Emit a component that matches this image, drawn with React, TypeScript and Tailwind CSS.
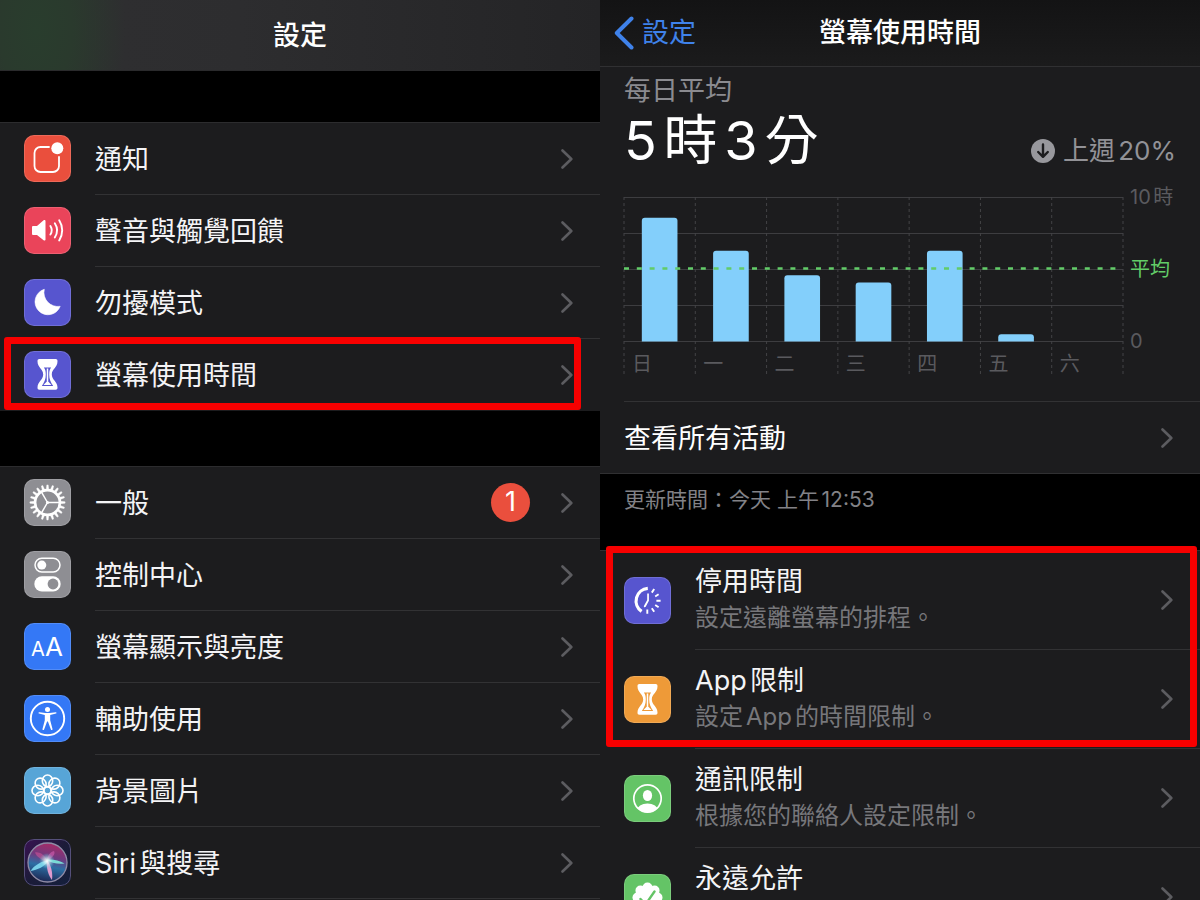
import type { ReactNode } from "react";
import clsx from "clsx";

type SettingRow = {
  id: string;
  label: string;
  desc?: string;
  icon: ReactNode;
  badge?: number;
};

type Usage = { day: string; hours: number };

const USAGE: Usage[] = [
  { day: "日", hours: 8.6 },
  { day: "一", hours: 6.3 },
  { day: "二", hours: 4.6 },
  { day: "三", hours: 4.1 },
  { day: "四", hours: 6.3 },
  { day: "五", hours: 0.5 },
  { day: "六", hours: 0 }
];

const PLOT_HEIGHT = 144;
const MAX_HOURS = 10;

function Tile({ className, children }: { className: string; children: ReactNode }) {
  return (
    <span className={clsx("block size-[47px] shrink-0 overflow-hidden rounded-[10px] ring-1 ring-white/15 ring-inset", className)}>
      <svg viewBox="0 0 47 47" className="size-full" fill="none" aria-hidden="true">
        {children}
      </svg>
    </span>
  );
}

function NotificationIcon() {
  return (
    <Tile className="bg-[#ea4f3d]">
      <path
        d="M25 12H16.5a6 6 0 0 0-6 6v13a6 6 0 0 0 6 6H29a6 6 0 0 0 6-6V22"
        stroke="#fff"
        strokeWidth="1.8"
        strokeLinecap="round"
      />
      <circle cx="33.3" cy="13.3" r="6" fill="#fff" />
    </Tile>
  );
}

function SoundIcon() {
  return (
    <Tile className="bg-[#ea445a]">
      <path d="M9 19h4l6.6-5.7c.9-.8 1.9-.3 1.9.8v18.3c0 1.1-1 1.6-1.9.8L13 28H9a1 1 0 0 1-1-1v-7a1 1 0 0 1 1-1Z" fill="#fff" />
      <path d="M26.4 19a8 8 0 0 1 0 8.6M30.8 16.2a13 13 0 0 1 0 14.2M35.2 13.2a18.5 18.5 0 0 1 0 20.2" stroke="#fff" strokeWidth="1.9" strokeLinecap="round" />
    </Tile>
  );
}

function MoonIcon() {
  return (
    <Tile className="bg-[#5755cf]">
      <path
        d="M20.3 10.3A13 13 0 1 0 36.2 27.3A14 14 0 0 1 20.3 10.3Z"
        fill="#fff"
        stroke="#fff"
        strokeWidth=".6"
        strokeLinejoin="round"
      />
    </Tile>
  );
}

function HourglassIcon({ className, cut }: { className: string; cut: string }) {
  return (
    <Tile className={className}>
      <path
        d="M15.5 8h16c1.5 0 2 .8 2 2.200C33.500 16.500 27.800 18 27.800 23.400S33.500 30.500 33.500 36.600c0 1.400-.5 2.200-2 2.200h-16c-1.500 0-2-.8-2-2.200C13.500 30.500 19.200 28.800 19.200 23.400S13.500 16.500 13.500 10.200c0-1.400.5-2.200 2-2.200Z"
        fill="#fff"
      />
      <path d="M19.8 16.6h7.400c-1.400 1.400-2 3.400-2 6.800 0 4.800 1.400 7.300 4 11.600H17.800c2.600-4.300 4-6.800 4-11.600 0-3.400-.6-5.400-2-6.800Z" fill={cut} />
      <path d="M23.5 17.600v13" stroke="#fff" strokeWidth="1.500" />
      <path d="M23.500 29c.5 2.200 2.600 3 4 4.900h-8c1.400-1.900 3.500-2.700 4-4.900Z" fill="#fff" />
    </Tile>
  );
}

function GearIcon() {
  return (
    <Tile className="bg-[#8e8e93]">
      {Array.from({ length: 20 }, (_, i) => (
        <path key={i} d="M22.300 10.500l.5-4.600h1.400l.5 4.600Z" fill="#fff" stroke="#fff" strokeWidth=".4" transform={`rotate(${i * 18} 23.5 23.5)`} />
      ))}
      <circle cx="23.5" cy="23.5" r="12.4" stroke="#fff" strokeWidth="2.6" />
      <path d="M23.500 23.500h12M23.500 23.500l-6-10.400M23.500 23.500l-6 10.400" stroke="#fff" strokeWidth="1.500" />
      <circle cx="23.500" cy="23.500" r="1.500" fill="#fff" />
    </Tile>
  );
}

function ControlCenterIcon() {
  return (
    <Tile className="bg-[#8e8e93]">
      <rect x="11" y="7.300" width="25" height="13.600" rx="6.800" stroke="#fff" strokeWidth="1.500" />
      <circle cx="17.800" cy="14.100" r="4.500" fill="#fff" />
      <rect x="10.300" y="25.300" width="26.400" height="15.300" rx="7.600" fill="#fff" />
      <circle cx="29" cy="33" r="5.400" fill="#8e8e93" />
    </Tile>
  );
}

function DisplayIcon() {
  return (
    <Tile className="bg-[#3478f6]">
      <text x="7" y="33" fill="#fff" fontSize="20">A</text>
      <text x="21" y="33" fill="#fff" fontSize="26">A</text>
    </Tile>
  );
}

function AccessibilityIcon() {
  return (
    <Tile className="bg-[#3478f6]">
      <circle cx="23.500" cy="23.500" r="16.700" stroke="#fff" strokeWidth="1.900" />
      <circle cx="23.500" cy="14.600" r="2.500" fill="#fff" />
      <path
        d="M15.300 17.200l6 .9h4.400l6-.9c1-.1 1.200 1.200.3 1.400l-5.800 1.500v5.200l2.300 8.600c.3 1.200-1.200 1.600-1.600.5l-3-8h-.8l-3 8c-.4 1.100-1.900.7-1.600-.5l2.300-8.600v-5.200L15 18.600c-.9-.2-.7-1.500.3-1.400Z"
        fill="#fff"
      />
    </Tile>
  );
}

function WallpaperIcon() {
  return (
    <Tile className="bg-[#57a5d7]">
      {[0, 45, 90, 135, 180, 225, 270, 315].map((a) => (
        <ellipse key={a} cx="23.500" cy="13.800" rx="5.200" ry="5.800" stroke="#fff" strokeWidth="1.600" transform={`rotate(${a} 23.5 23.5)`} />
      ))}
      <circle cx="23.500" cy="23.500" r="3.500" stroke="#fff" strokeWidth="1.600" />
    </Tile>
  );
}

function SiriIcon() {
  return (
    <Tile className="bg-[#1c1a38]">
      <defs>
        <linearGradient id="siri-bg" x1="0" y1="0" x2="1" y2="1">
          <stop offset="0" stopColor="#3a1252" />
          <stop offset=".5" stopColor="#1b1b38" />
          <stop offset="1" stopColor="#14203c" />
        </linearGradient>
        <linearGradient id="siri-orb" x1=".6" y1="0" x2=".4" y2="1">
          <stop offset="0" stopColor="#a82a66" />
          <stop offset=".35" stopColor="#6f3a80" />
          <stop offset=".6" stopColor="#2c6fa4" />
          <stop offset="1" stopColor="#1d2450" />
        </linearGradient>
        <radialGradient id="siri-glow">
          <stop offset="0" stopColor="#fff" />
          <stop offset=".35" stopColor="#d8f4f6" stopOpacity=".7" />
          <stop offset="1" stopColor="#4fc8e0" stopOpacity="0" />
        </radialGradient>
      </defs>
      <rect width="47" height="47" fill="url(#siri-bg)" />
      <circle cx="23.500" cy="23.500" r="19.500" fill="url(#siri-orb)" stroke="#8f8ba6" strokeWidth="1.300" />
      <path d="M23 23C17 21 12 17 11 13.500c5-1 11 3 12 9.500Z" fill="#e05a9c" opacity=".5" />
      <path d="M23 22c0-5 3-9 7-10 2 3-2 7-7 10Z" fill="#d65fb0" opacity=".6" />
      <path d="M22 20.500c7-.5 13 .5 18.500 4-6 1-14-.5-18.500-4Z" fill="#7deadd" opacity=".9" />
      <path d="M25 21.500c-8 .5-15 5-18.500 10.500 7-1 14-4.500 18.500-10.500Z" fill="#7fdcf2" opacity=".9" />
      <path d="M23 21c4 5 6 12.500 5 20-3.500-4-6-12-5-20Z" fill="#f3a3d6" opacity=".9" />
      <circle cx="23" cy="22" r="8" fill="url(#siri-glow)" />
      <rect x=".5" y=".5" width="46" height="46" rx="9.500" stroke="#55507a" />
    </Tile>
  );
}

function DowntimeIcon() {
  return (
    <Tile className="bg-[#5755cf]">
      <path d="M23.800 11.300A12.700 12.700 0 0 0 17.600 34.400" stroke="#fff" strokeWidth="3.200" />
      <path d="M23.200 16.500h1.700v7.300l-3.200 6c-.7 1-2.200.3-1.800-.8l3.300-6Z" fill="#fff" />
      <path
        d="M27.800 15.600l2.400-3.600M31.200 19.500l3.400-2.200M32.400 23.700h4.200M31.200 28l3.400 2.200M27.800 31.200l2.400 3.600M23.300 32.500v4.200"
        stroke="#fff"
        strokeWidth="1.900"
      />
    </Tile>
  );
}

function ContactIcon() {
  return (
    <Tile className="bg-[#64c466]">
      <clipPath id="contact-clip">
        <circle cx="23.500" cy="23.500" r="14" />
      </clipPath>
      <circle cx="23.500" cy="23.500" r="13.700" stroke="#fff" strokeWidth="1.700" />
      <ellipse cx="23.500" cy="20.500" rx="4.600" ry="5.600" fill="#fff" />
      <ellipse cx="23.500" cy="35.500" rx="10.500" ry="7" fill="#fff" clipPath="url(#contact-clip)" />
    </Tile>
  );
}

function AllowedIcon() {
  return (
    <Tile className="bg-[#64c466]">
      {[0, 45, 90, 135, 180, 225, 270, 315].map((a) => (
        <circle key={a} cx="23.500" cy="13.500" r="5" fill="#fff" transform={`rotate(${a} 23.5 23.5)`} />
      ))}
      <circle cx="23.500" cy="23.500" r="11.500" fill="#fff" />
      <path d="M16.500 25l5 5.500 9-13" stroke="#64c466" strokeWidth="2.400" strokeLinecap="round" strokeLinejoin="round" />
    </Tile>
  );
}

function Chevron() {
  return (
    <svg viewBox="0 0 12 20" className="h-5 w-3 shrink-0" fill="none" aria-hidden="true">
      <path d="M1.500 1.500L10.300 10 1.500 18.500" stroke="#5c5c60" strokeWidth="2.600" strokeLinecap="round" strokeLinejoin="round" />
    </svg>
  );
}

// red marker frame drawn over the rows it surrounds
function Marker({ className }: { className: string }) {
  return <div className={clsx("pointer-events-none absolute z-10 rounded-[3px] border-7 border-[#f70000]", className)} />;
}

function Row({ row, last }: { row: SettingRow; last?: boolean }) {
  return (
    <button type="button" className="flex w-full items-stretch pl-6 text-left">
      <span className="mr-6 flex items-center pb-px">{row.icon}</span>
      <span
        className={clsx(
          "flex flex-1 items-center border-b pr-[27px]",
          row.desc === undefined ? "h-[72px]" : "h-[99px]",
          last ? "border-transparent" : "border-[#323234]"
        )}
      >
        <span className={clsx("flex flex-1 flex-col", row.desc === undefined && "pt-0.5")}>
          <span className="text-[27px] leading-9 text-[#f4f4f6]">{row.label}</span>
          {row.desc !== undefined ? <span className="h-9 text-[24px] leading-9 text-[#77777b]">{row.desc}</span> : null}
        </span>
        {row.badge ? (
          <span className="mr-[31px] flex size-[39px] items-center justify-center rounded-full bg-[#ea4f3d] text-[27px] text-white">
            {row.badge}
          </span>
        ) : null}
        <Chevron />
      </span>
    </button>
  );
}

const ALERT_ROWS: SettingRow[] = [
  { id: "notifications", label: "通知", icon: <NotificationIcon /> },
  { id: "sounds", label: "聲音與觸覺回饋", icon: <SoundIcon /> },
  { id: "dnd", label: "勿擾模式", icon: <MoonIcon /> },
  { id: "screen-time", label: "螢幕使用時間", icon: <HourglassIcon className="bg-[#5755cf]" cut="#5755cf" /> }
];

const GENERAL_ROWS: SettingRow[] = [
  { id: "general", label: "一般", icon: <GearIcon />, badge: 1 },
  { id: "control-center", label: "控制中心", icon: <ControlCenterIcon /> },
  { id: "display", label: "螢幕顯示與亮度", icon: <DisplayIcon /> },
  { id: "accessibility", label: "輔助使用", icon: <AccessibilityIcon /> },
  { id: "wallpaper", label: "背景圖片", icon: <WallpaperIcon /> },
  { id: "siri", label: "Siri與搜尋", icon: <SiriIcon /> }
];

const LIMIT_ROWS: SettingRow[] = [
  { id: "downtime", label: "停用時間", desc: "設定遠離螢幕的排程。", icon: <DowntimeIcon /> },
  { id: "app-limits", label: "App限制", desc: "設定App的時間限制。", icon: <HourglassIcon className="bg-[#ee9a38]" cut="#ee9a38" /> }
];

const MORE_ROWS: SettingRow[] = [
  { id: "communication", label: "通訊限制", desc: "根據您的聯絡人設定限制。", icon: <ContactIcon /> },
  { id: "always-allowed", label: "永遠允許", desc: "", icon: <AllowedIcon /> }
];

function SettingsPane() {
  return (
    <section className="min-w-0 overflow-hidden bg-[#1c1c1e]">
      <header className="flex h-[71px] items-center justify-center border-b border-[#2a2a2c] bg-[radial-gradient(ellipse_90px_160px_at_36px_30px,#293d2d_0,#2a3a2d_40%,transparent_100%),linear-gradient(90deg,#2f2f31_0,#2d2d2f_40%,#242426_100%)] pt-0.5">
        <h1 className="text-[27px] leading-9 font-medium text-white">設定</h1>
      </header>
      <div className="h-[52px] border-b border-[#2c2c2e] bg-black" />
      <ul>
        {ALERT_ROWS.map((row) => (
          <li key={row.id} className="relative">
            <Row row={row} last={row.id === "screen-time"} />
            {row.id === "screen-time" ? <Marker className="-top-0.5 right-[19px] bottom-px left-1" /> : null}
          </li>
        ))}
      </ul>
      <div className="h-14 border-b border-[#2c2c2e] bg-black" />
      <ul>
        {GENERAL_ROWS.map((row) => (
          <li key={row.id}>
            <Row row={row} />
          </li>
        ))}
      </ul>
    </section>
  );
}

function UsageChart() {
  const pct = (n: number) => `${(n / USAGE.length) * 100}%`;
  return (
    <div className="mt-3 flex">
      <svg className="mt-3 h-[178px] flex-1 overflow-visible" role="img" aria-label="每日平均">
        {[0, 36, 72, 108, 144].map((y) => (
          <line key={y} x1="0" x2="100%" y1={y + 0.5} y2={y + 0.5} stroke="#3d3d40" />
        ))}
        {[0, 1, 2, 3, 4, 5, 6, 7].map((n) => (
          <line key={n} x1={pct(n)} x2={pct(n)} y1="0" y2="178" stroke="#434346" strokeDasharray="3 3" />
        ))}
        <svg width="100%" height={PLOT_HEIGHT + 0.5}>
          {USAGE.filter((u) => u.hours > 0).map((u, i) => {
            const h = (u.hours / MAX_HOURS) * PLOT_HEIGHT;
            return <rect key={u.day} x={pct(i + 0.25)} y={PLOT_HEIGHT + 0.5 - h} width={pct(0.5)} height={h + 4} rx="3" fill="#83cffb" />;
          })}
        </svg>
        <line x1="0" x2="100%" y1="71.500" y2="71.500" stroke="#62cc68" strokeWidth="2.500" strokeDasharray="5 7.800" />
        {USAGE.map((u, i) => (
          <text key={u.day} x={pct(i)} dx="8" y="174" fill="#5a5a5e" fontSize="20">
            {u.day}
          </text>
        ))}
      </svg>
      <div className="flex h-[168px] w-[77px] flex-col justify-between pl-[7px] text-[20px] leading-6 text-[#5a5a5e]">
        <span>10時</span>
        <span className="text-[#62cc68]">平均</span>
        <span>0</span>
      </div>
    </div>
  );
}

function ScreenTimePane() {
  return (
    <section className="min-w-0 overflow-hidden bg-[#1c1c1e]">
      <header className="grid h-[67px] grid-cols-[1fr_auto_1fr] items-center border-b border-[#303032] bg-linear-to-b from-[#131314] to-[#1b1b1c] pb-px">
        <button type="button" className="flex items-center gap-2 pl-3.5 text-[27px] leading-9 text-[#3f82ea]">
          <svg viewBox="0 0 20 34" className="h-[34px] w-5" fill="none" aria-hidden="true">
            <path d="M17.500 2.500L2.800 17l14.700 14.500" stroke="currentColor" strokeWidth="4" strokeLinecap="round" strokeLinejoin="round" />
          </svg>
          設定
        </button>
        <h2 className="text-[27px] leading-9 font-medium text-white">螢幕使用時間</h2>
      </header>

      <div className="pt-1.5 pl-6">
        <p className="text-[27px] leading-9 text-[#8b8b90]">每日平均</p>
        <div className="flex items-end justify-between pr-6">
          <p className="text-[54px] leading-[64px] text-white">5時3分</p>
          <p className="flex items-center gap-2 text-[26px] leading-[44px] text-[#929297]">
            <svg viewBox="0 0 24 24" className="size-6" fill="none" aria-hidden="true">
              <circle cx="12" cy="12" r="12" fill="#98989d" />
              <path d="M12 5.500v12M7.200 13l4.800 4.800 4.800-4.800" stroke="#1c1c1e" strokeWidth="2.400" strokeLinecap="round" strokeLinejoin="round" />
            </svg>
            <span>上週20%</span>
          </p>
        </div>
        <UsageChart />
        <button type="button" className="mt-[26px] flex h-[72px] w-full items-center border-t border-[#323234] pr-[27px] text-left">
          <span className="flex-1 pt-0.5 text-[27px] leading-9 text-white">查看所有活動</span>
          <Chevron />
        </button>
      </div>

      <div className="h-[78px] border-y border-[#303032] bg-black pt-2 pl-6">
        <p className="text-[21px] leading-9 text-[#828287]">更新時間：今天 上午12:53</p>
      </div>

      <ul className="relative">
        {LIMIT_ROWS.map((row) => (
          <li key={row.id}>
            <Row row={row} />
          </li>
        ))}
        <Marker className="-top-[5px] right-[3px] bottom-0.5 left-1.5" />
      </ul>
      <ul>
        {MORE_ROWS.map((row) => (
          <li key={row.id}>
            <Row row={row} />
          </li>
        ))}
      </ul>
    </section>
  );
}

export default function App() {
  return (
    <main
      lang="zh-Hant"
      className="grid h-screen grid-cols-2 overflow-hidden bg-black font-[Inter,'Noto_Sans_CJK_TC',sans-serif] [text-autospace:normal]"
    >
      <SettingsPane />
      <ScreenTimePane />
    </main>
  );
}
